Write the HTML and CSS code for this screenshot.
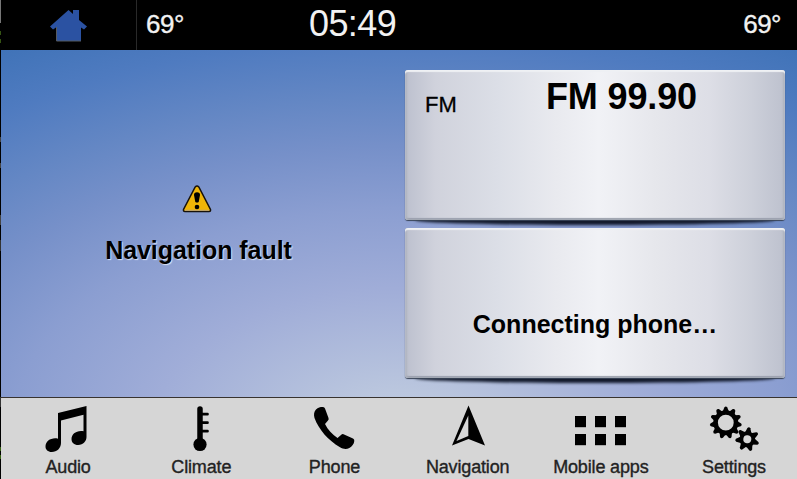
FILE: index.html
```html
<!DOCTYPE html>
<html lang="en">
<head>
<meta charset="utf-8">
<title>Home</title>
<link rel="stylesheet" href="styles.css">
</head>
<body>
<div class="screen">
  <div class="edge"></div>
  <header class="status">
    <div class="home">
      <svg width="38" height="33" viewBox="0 0 38 33"><path d="M18.5 1 23 5V1h6v10l8 6.500-3 3-3-2V32H6V18.500l-3 2-3-3z" fill="#2b52a2"/><path d="M6.500 18v14H31" fill="none" stroke="#555a61"/></svg>
    </div>
    <span class="temp">69°</span>
    <span class="clock">05:49</span>
    <span class="temp temp-right">69°</span>
  </header>
  <main class="content">
    <section class="map">
      <svg class="warning" width="30" height="28" viewBox="0 0 30 28"><path d="M13.200 2q1.800-2 3.600 0L28.500 24.500q.4 1.900-1.500 2H3q-1.900-.1-1.500-2z" fill="#efb507" stroke="#17120b" stroke-width="1.500"/><path d="M3 25.300h24" stroke="#bda77e"/><path d="M12 10q0-2.700 3-2.700t3 2.700l-1.300 7q-1.700 1-3.400 0z"/><circle cx="15" cy="22" r="2.300"/></svg>
      <p class="message">Navigation fault</p>
    </section>
    <section class="panels">
      <article class="panel radio">
        <span class="band">FM</span>
        <strong class="station">FM 99.90</strong>
      </article>
      <article class="panel phone">
        <p class="connecting">Connecting phone…</p>
      </article>
    </section>
  </main>
  <nav class="tabs">
    <a class="tab"><svg width="44" height="48" viewBox="2.500 0 44 48"><path d="M14.500 8 43 1v31c0 4-3.300 8-8.300 8-4.200 0-6.700-2.500-6.700-6 0-5 5-9 12-7.800V9.800L17.500 15.500V38c0 5-4 9-9.200 9C4.300 47 2 44.600 2 41.500c0-5.400 6-9.400 12.500-7.800z"/></svg><span>Audio</span></a>
    <a class="tab"><svg width="44" height="48" viewBox="0 0 44 48"><g stroke="#000" fill="none" stroke-linecap="round"><path d="M21 4v36" stroke-width="5.500"/><path d="M21 9.200h7.500M21 17.700h7.500M21 26.200h7.500" stroke-width="2.700"/></g><circle cx="21" cy="39.500" r="6.600"/></svg><span>Climate</span></a>
    <a class="tab"><svg width="44" height="48" viewBox="0 0 44 48"><path d="M4 4.500C6 2.500 8 2 11 2q1.500 0 2 1.500L16.500 13q.5 1.500-.5 2.500L13 19c3 6 7 10 12.500 14L29 30q1.200-1.200 2.500-.8L41 33.500q1.500.5 1.300 2.500c-.3 3-2.300 5.500-5 7-3 1.500-6.300 1-9.300-.7C16 35 7 25 2.500 13 1.500 9.500 2 6.500 4 4.500z"/></svg><span>Phone</span></a>
    <a class="tab"><svg width="44" height="48" viewBox="0 0 44 48"><path d="M22.500.5 39 40.500 22.500 34 6 40.500z"/><path d="M22.300 10.500V31L10.500 36z" fill="#d6d6d6"/></svg><span>Navigation</span></a>
    <a class="tab"><svg width="52" height="48" viewBox="0 0 52 48"><g class="tiles"><path d="M0 11h11v11H0zM20 11h11v11H20zM40 11h11v11H40zM0 29h11v11H0zM20 29h11v11H20zM40 29h11v11H40z"/></g></svg><span>Mobile apps</span></a>
    <a class="tab"><svg width="50" height="48" viewBox="0 0 50 48">
      <defs>
        <path id="tooth" d="M-3.200-11 -1.500-15.300Q0-17 1.500-15.300L3.200-11z"/>
        <path id="cog" d="M-3.400-6 -1.500-11.300Q0-13 1.500-11.300L3.400-6z"/>
      </defs>
      <g transform="translate(16.800 17.700)">
        <circle r="10.200" fill="none" stroke="#000" stroke-width="4.600"/>
        <use href="#tooth"/><use href="#tooth" transform="rotate(32.730)"/><use href="#tooth" transform="rotate(65.450)"/><use href="#tooth" transform="rotate(98.180)"/><use href="#tooth" transform="rotate(130.910)"/><use href="#tooth" transform="rotate(163.640)"/><use href="#tooth" transform="rotate(196.360)"/><use href="#tooth" transform="rotate(229.090)"/><use href="#tooth" transform="rotate(261.820)"/><use href="#tooth" transform="rotate(294.550)"/><use href="#tooth" transform="rotate(327.270)"/>
      </g>
      <g transform="translate(38.300 34.300) rotate(8)">
        <circle r="6" fill="none" stroke="#000" stroke-width="4"/>
        <use href="#cog"/><use href="#cog" transform="rotate(51.430)"/><use href="#cog" transform="rotate(102.860)"/><use href="#cog" transform="rotate(154.290)"/><use href="#cog" transform="rotate(205.710)"/><use href="#cog" transform="rotate(257.140)"/><use href="#cog" transform="rotate(308.570)"/>
      </g>
    </svg><span>Settings</span></a>
  </nav>
</div>
</body>
</html>
```

FILE: styles.css
```css
* { box-sizing: border-box; }
body {
  margin: 0;
  overflow: hidden;
  background: #000;
  font-family: "Liberation Sans", Arial, sans-serif;
}
p { margin: 0; }
svg { display: block; overflow: visible; }
.screen {
  display: grid;
  grid-template: 50px 347px 82px / 1px 796px;
  width: 797px;
  height: 479px;
}
.edge {
  grid-row: 1 / 4;
  background: linear-gradient(#777 0 23px, #000 23px 31px, #355413 31px 35px, #000 35px 39px, #355413 39px 43px, #000 43px 137px, #444 137px 142px, #000 142px 163px, #444 163px 168px, #000 168px 215px, #444 215px 225px, #000 225px 240px, #333 240px 251px, #000 251px 397px, #333 397px 407px, #000 407px 447px, #386313 447px 451px, #000 451px 455px, #386313 455px 459px, #000 459px);
}
.status {
  display: grid;
  grid-template-columns: 136px 172px 1fr auto;
  align-items: center;
  padding-right: 16px;
  background: #000;
  color: #f2f2f2;
}
.home {
  height: 50px;
  padding: 9px 0 0 49px;
  border-right: 1px solid #292929;
}
.temp {
  padding: 0 0 2px 9px;
  font-size: 26px;
  line-height: 30px;
  letter-spacing: -.5px;
  -webkit-text-stroke: .35px #f2f2f2;
}
.temp-right { padding-left: 0; }
.clock {
  padding-bottom: 3px;
  font-size: 36px;
  line-height: 40px;
  letter-spacing: -.6px;
}
.content {
  display: grid;
  grid-template-columns: 404px 380px;
  background: radial-gradient(775px 443px at 399px 380px, #c0cce2 0, #bac6de 9%, #a0add8 32%, #8b9ed1 50%, #7690c9 64%, #6487c4 75%, #4f7bc0 88%, #4073b8 100%);
}
.map {
  display: flex;
  flex-direction: column;
  align-items: center;
  padding: 135px 9px 0 0;
}
.warning { margin-right: 3px; }
.message {
  margin-top: 22px;
  font-size: 25px;
  font-weight: bold;
  line-height: 30px;
  letter-spacing: -.05px;
  text-shadow: 1px 1px 1px #dbe4f5;
}
.panels {
  display: flex;
  flex-direction: column;
  gap: 8px;
  padding-top: 20px;
}
.panel {
  position: relative;
  height: 150px;
  border-radius: 3px;
  background: linear-gradient(90deg, #bcc0ce, #d0d2dc 8%, #dcdfe7 25%, #e9eaef 40%, #f1f2f6 51%, #e6e7ec 66%, #dddee6 80%, #cdd0da 91%, #bdc1ce);
  box-shadow: inset 0 2px 1px #eff1f4, inset 2px 0 2px #aeb3bf, inset -2px 0 2px #aeb3bf, inset 0 -2px 1px #999fab, 0 1px 1px #394457;
}
.panel::before {
  content: "";
  position: absolute;
  z-index: -1;
  inset: auto 10px -5px;
  height: 10px;
  border-radius: 50%;
  background: #11182a;
  filter: blur(1.8px);
}
.content, .panels { isolation: isolate; }
.radio {
  display: grid;
  grid-template-columns: 141px auto;
  align-items: start;
}
.band {
  padding: 22px 0 0 20px;
  font-size: 22px;
  line-height: 26px;
  -webkit-text-stroke: .3px #000;
}
.station {
  padding-top: 7px;
  font-size: 36px;
  line-height: 40px;
  letter-spacing: -.15px;
}
.connecting {
  padding-top: 81px;
  text-align: center;
  font-size: 25px;
  font-weight: bold;
  line-height: 30px;
}
.tabs {
  display: grid;
  grid-template-columns: repeat(6, 133.2px);
  border-top: 1px solid #38332f;
  background: #d6d6d6;
  overflow: hidden;
}
.tab {
  display: flex;
  flex-direction: column;
  align-items: center;
  padding: 7px 0 0 1px;
  color: #222;
  font-size: 18px;
  line-height: 22px;
  letter-spacing: -.15px;
  white-space: nowrap;
  -webkit-text-stroke: .35px #222;
}
.tab span { margin-top: 3px; }
.tiles { filter: drop-shadow(0 1px 0 #aaa); }
```
